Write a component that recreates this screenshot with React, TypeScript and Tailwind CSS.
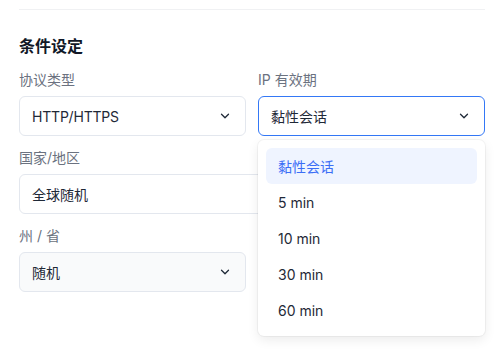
import React from "react";

const Chevron = () => (
  <svg width="14" height="14" viewBox="0 0 24 24" fill="none" stroke="#1f2937" strokeWidth="2.2" strokeLinecap="round" strokeLinejoin="round">
    <path d="M6 9l6 6 6-6" />
  </svg>
);

const font = { fontFamily: "Inter, 'Noto Sans CJK SC', sans-serif" };

function Label({ children }: { children: React.ReactNode }) {
  return <div className="h-5 mb-1.5 text-[14px] leading-5 text-[#6b7280]">{children}</div>;
}

export default function App() {
  const items = ["黏性会话", "5 min", "10 min", "30 min", "60 min"];
  return (
    <div className="w-[504px] h-[356px] bg-white px-[19px] pt-[9px] overflow-hidden" style={font}>
      <div className="border-t border-[#f0f1f3]" />
      <div className="mt-[25px] h-[22px] text-[16px] leading-[22px] font-semibold text-[#111827]">条件设定</div>
      <div className="mt-[13px] grid grid-cols-2 gap-x-3 gap-y-3">
        <div>
          <Label>协议类型</Label>
          <div className="h-10 rounded-md border border-[#e3e7ee] flex items-center justify-between pl-3 pr-[13px] text-[14px] tracking-[-0.2px] text-[#1f2937]">
            <span>HTTP/HTTPS</span>
            <Chevron />
          </div>
        </div>
        <div className="relative z-10">
          <Label>IP 有效期</Label>
          <div className="h-10 rounded-md border border-[#3478f6] flex items-center justify-between pl-3 pr-[13px] text-[14px] text-[#1f2937]">
            <span>黏性会话</span>
            <Chevron />
          </div>
          <div className="absolute left-0 right-0 top-[calc(100%+4px)] bg-white rounded-md shadow-[0_0_0_1px_rgba(0,0,0,0.04),0_4px_12px_rgba(0,0,0,0.08)] p-2">
            {items.map((it, i) => (
              <div
                key={it}
                className={
                  i === 0
                    ? "h-9 rounded-md bg-[#eff4ff] text-[#3b6ef6] flex items-center px-3 text-[14px]"
                    : "h-9 rounded-md text-[#1f2937] flex items-center px-3 text-[14px]"
                }
              >
                {it}
              </div>
            ))}
          </div>
        </div>
        <div className="col-span-2">
          <Label>国家/地区</Label>
          <div className="h-10 rounded-md border border-[#e3e7ee] flex items-center justify-between pl-3 pr-[13px] text-[14px] text-[#1f2937]">
            <span>全球随机</span>
            <Chevron />
          </div>
        </div>
        <div>
          <Label>州 / 省</Label>
          <div className="h-10 rounded-md border border-[#e3e7ee] bg-[#f9fafb] flex items-center justify-between pl-3 pr-[13px] text-[14px] text-[#1f2937]">
            <span>随机</span>
            <Chevron />
          </div>
        </div>
      </div>
    </div>
  );
}
